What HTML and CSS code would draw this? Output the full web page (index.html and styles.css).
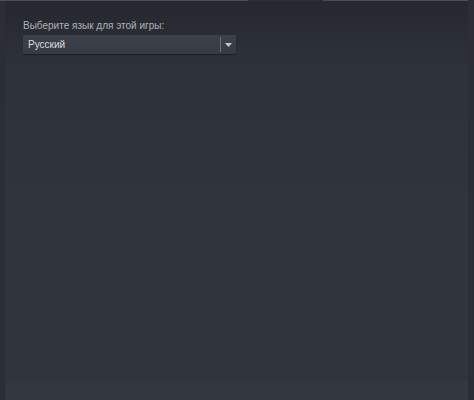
FILE: index.html
```html
<!DOCTYPE html>
<html lang="ru">
<head>
   <meta charset="UTF-8">
   <title>Язык</title>
   <link rel="stylesheet" href="styles.css">
</head>
<body>
   <div class="tabs flex">
      <div class="tab tab-left"></div>
      <div class="tab tab-gap"></div>
      <div class="tab tab-right"></div>
   </div>
   <div class="panel">
      <div class="content">
         <label class="lbl" for="lang">Выберите язык для этой игры:</label>
         <div class="select flex" id="lang">
            <span class="value">Русский</span>
            <span class="sep"></span>
            <span class="arrow">
               <svg width="7" height="4" viewBox="0 0 7 4"><path d="M0 0H7L3.5 4Z" fill="#c6c8ca"/></svg>
            </span>
         </div>
      </div>
   </div>
</body>
</html>
```

FILE: styles.css
```css
* { padding: 0;
    margin: 0;
    box-sizing: border-box;
    font-family: Arial, "Liberation Sans", sans-serif;
}
.flex { display: flex; }

html, body {
   height: 100%;
   background-color: #2b2e35;
}
body {
   display: flex;
   flex-direction: column;
}
.tabs {
   height: 1px;
}
.tab-left { width: 248px; background-color: #4a4e55; }
.tab-gap { width: 75px; }
.tab-right { width: 145px; background-color: #4a4e55; }

.panel {
   flex: 1;
   margin: 0 6px 0 5px;
   background: linear-gradient(to bottom, #25282e 0px, #2d3138 60px, #30343b 200px, #30343b 380px, #33373f 381px);
}
.content {
   padding: 18px 0 0 18px;
}
.lbl {
   display: block;
   font-size: 10px;
   color: #aeb2b6;
   line-height: 14px;
   margin-bottom: 2px;
}
.select {
   width: 213px;
   height: 19px;
   align-items: center;
   background: linear-gradient(to bottom, #3d424a, #363a42);
   box-shadow: 0 1px 1px rgba(0,0,0,0.3);
}
.value {
   flex: 1;
   padding-left: 5px;
   font-size: 10px;
   color: #dadcde;
}
.sep {
   width: 1px;
   height: 15px;
   background-color: #6b6f75;
}
.arrow {
   width: 15px;
   display: flex;
   justify-content: center;
   align-items: center;
}
```
